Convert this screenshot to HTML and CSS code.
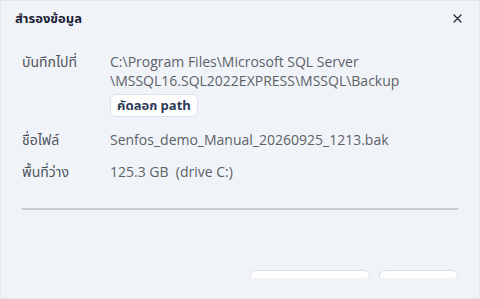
FILE: index.html
```html
<!DOCTYPE html>
<html lang="th">
<head>
<meta charset="utf-8">
<link rel="stylesheet" href="styles.css">
</head>
<body>
<div class="dialog">
  <header class="dlg-head">
    <h1 class="dlg-title">สำรองข้อมูล</h1>
    <button class="close" aria-label="close">
      <svg width="9" height="9" viewBox="0 0 9 9"><path d="M1 1L8 8M8 1L1 8" stroke="#2b2f3d" stroke-width="1.4" stroke-linecap="round"/></svg>
    </button>
  </header>
  <div class="dlg-body">
    <div class="info">
      <div class="lbl">บันทึกไปที่</div>
      <div class="val">
        <div class="path">C:\Program Files\Microsoft SQL Server<br>\MSSQL16.SQL2022EXPRESS\MSSQL\Backup</div>
        <button class="copy">คัดลอก path</button>
      </div>
      <div class="lbl">ชื่อไฟล์</div>
      <div class="val">Senfos_demo_Manual_20260925_1213.bak</div>
      <div class="lbl">พื้นที่ว่าง</div>
      <div class="val">125.3 GB&nbsp; (drive C:)</div>
    </div>
    <hr class="sep">
    <div class="actions">
      <button class="btn wide"></button>
      <button class="btn"></button>
    </div>
  </div>
</div>
</body>
</html>
```
FILE: styles.css
```css
* { box-sizing: border-box; }
html, body { margin: 0; padding: 0; }
body {
  width: 480px; height: 299px; overflow: hidden;
  font-family: "Open Sans", "Noto Sans", "Noto Sans Thai", sans-serif;
  background: #f0f4f9;
}
.dialog {
  width: 480px; height: 299px;
  background: #f0f4f9;
  border: 1px solid #e1e7ef;
  display: flex; flex-direction: column;
}
.dlg-head {
  display: flex; align-items: center; justify-content: space-between;
  padding: 5px 14px 0 14px;
  height: 30px;
}
.dlg-title { margin: 0; font-size: 13px; font-weight: 700; color: #1b2033; }
.close { border: 0; background: none; padding: 0; width: 16px; height: 16px; display: flex; align-items: center; justify-content: center; }
.dlg-body {
  flex: 1; overflow: hidden;
  padding: 21px 21px 0 21px;
  margin-bottom: 20px;
}
.info {
  display: grid; grid-template-columns: 88px 1fr;
  row-gap: 13px;
  font-size: 14px; color: #5d6168;
  line-height: 19px;
}
.lbl { color: #50545e; }
.path { line-height: 19px; }
.copy {
  margin-top: 4px;
  height: 23px; padding: 0 6px;
  background: #fff; border: 1px solid #dbe2ea; border-radius: 6px;
  font-family: inherit; font-size: 13px; font-weight: 700; color: #2d3a58;
}
.sep { margin: 27px 0 0 0; border: 0; height: 2px; background: #c9cdd2; }
.actions { display: flex; justify-content: flex-end; gap: 9px; margin-top: 60px; }
.btn { width: 79px; height: 32px; background: #fff; border: 1px solid #dcdfe4; border-radius: 6px; }
.btn.wide { width: 120px; }
```
